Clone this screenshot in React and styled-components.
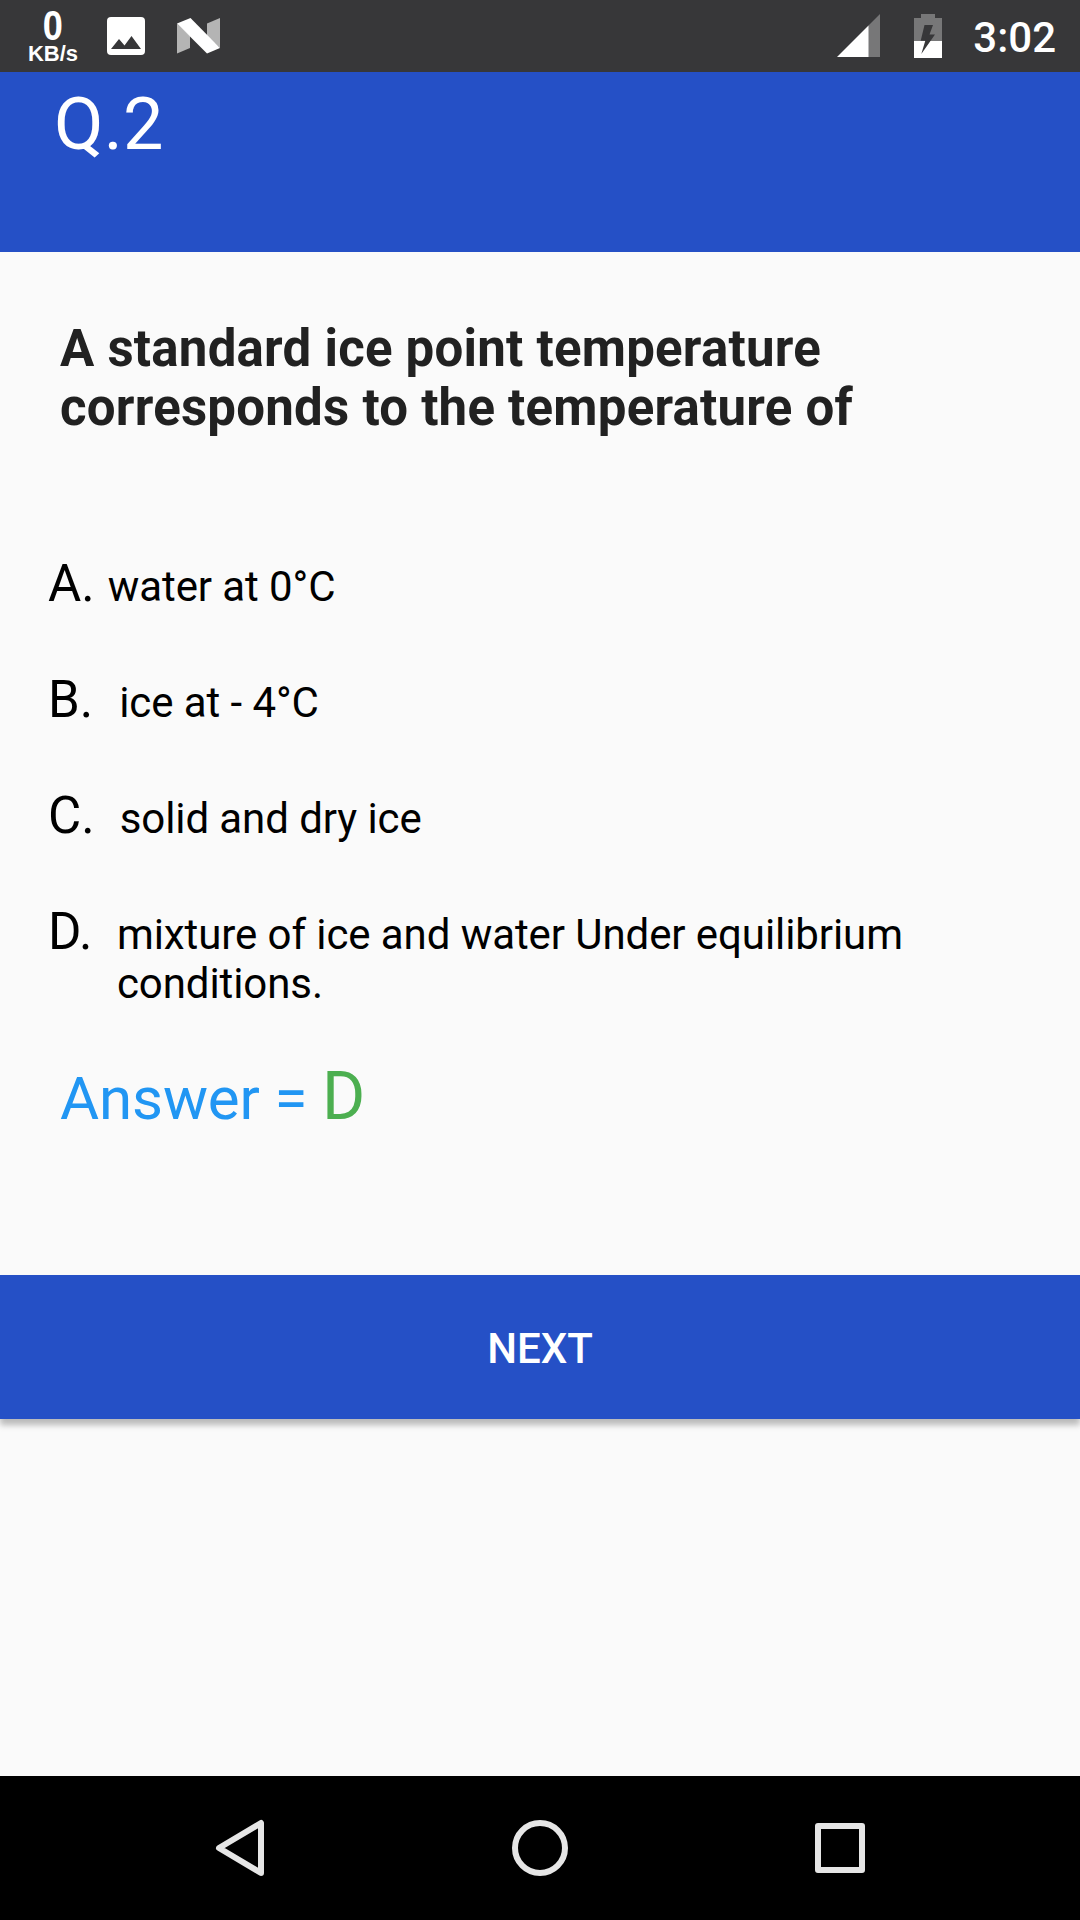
import styled, { createGlobalStyle } from 'styled-components';

const GlobalStyle = createGlobalStyle`
  * {
    box-sizing: border-box;
  }

  body {
    margin: 0;
    font-family: Roboto, 'Liberation Sans', sans-serif;
    background-color: #fafafa;
  }
`;

const Screen = styled.div`
  display: flex;
  flex-direction: column;
  width: 1080px;
  height: 1920px;
  background-color: #fafafa;
`;

const StatusBar = styled.div`
  display: flex;
  justify-content: space-between;
  height: 72px;
  padding: 0 24px 0 28px;
  background-color: #373739;
  color: #fff;
`;

const StatusGroup = styled.div`
  display: flex;
  align-items: flex-start;
`;

const NetSpeed = styled.div`
  display: flex;
  flex-direction: column;
  align-items: center;
  width: 50px;
  padding-top: 8px;
  font-family: 'Liberation Sans', Arial, sans-serif;
  font-weight: 700;
`;

const SpeedValue = styled.span`
  font-size: 42px;
  line-height: 36px;
  transform: scaleX(0.86);
`;

const SpeedUnit = styled.span`
  font-size: 22px;
  line-height: 20px;
`;

const StatusIcon = styled.svg`
  display: block;
  flex: none;
  margin-left: ${({ $space }) => $space}px;
`;

const Clock = styled.span`
  margin-left: 31px;
  font-size: 42px;
  font-weight: 500;
  line-height: 75px;
`;

const Header = styled.header`
  height: 180px;
  padding: 11px 54px 0;
  background-color: #2550c6;
`;

const HeaderTitle = styled.h1`
  margin: 0;
  font-size: 72px;
  font-weight: 400;
  line-height: 84px;
  letter-spacing: 0.3px;
  color: #fff;
`;

const Main = styled.main`
  flex: 1;
  padding-top: 67px;
`;

const Question = styled.h2`
  width: 900px;
  margin: 0 0 117px 60px;
  font-size: 51px;
  font-weight: 700;
  line-height: 59px;
  letter-spacing: 0.23px;
  color: #212121;
`;

const Options = styled.div`
  display: flex;
  flex-direction: column;
  gap: 56px;
  padding-left: 48px;
  color: #000;
`;

const Option = styled.div`
  display: flex;
  align-items: baseline;
  gap: ${({ $gap }) => $gap}px;
`;

const OptionLetter = styled.span`
  font-size: 51px;
  line-height: 60px;
`;

const OptionText = styled.span`
  width: 800px;
  font-size: 42px;
  line-height: 49px;
  letter-spacing: -0.08px;
`;

const Answer = styled.p`
  margin: 50px 0 137px 60px;
  font-size: 60px;
  line-height: 78px;
  letter-spacing: -0.12px;
  color: #2196f3;
`;

const AnswerLetter = styled.span`
  font-size: 66px;
  color: #4caf50;
`;

const NextButton = styled.button`
  display: block;
  width: 100%;
  height: 144px;
  padding: 3px 0 0;
  border: none;
  background-color: #2550c6;
  box-shadow: 0 6px 6px rgba(0, 0, 0, 0.26);
  color: #fff;
  font-family: inherit;
  font-size: 42px;
  font-weight: 500;
`;

const NavBar = styled.nav`
  display: flex;
  justify-content: center;
  align-items: center;
  gap: 228px;
  height: 144px;
  background-color: #000;
`;

const NavIcon = styled.svg`
  display: block;
  fill: none;
  stroke: #e6e6e6;
  stroke-width: 6;
  stroke-linejoin: round;
`;

const options = [
  { letter: 'A.', text: 'water at 0°C', gap: 13 },
  { letter: 'B.', text: 'ice at - 4°C', gap: 26 },
  { letter: 'C.', text: 'solid and dry ice', gap: 25 },
  {
    letter: 'D.',
    text: 'mixture of ice and water Under equilibrium conditions.',
    gap: 24.5,
  },
];

function PictureIcon() {
  return (
    <StatusIcon $space={29} width="38" height="72" viewBox="0 0 38 72">
      <rect y="17" width="38" height="38" rx="4" fill="#fff" />
      <path d="M4 49l8-10 5.500 6.500 7-9.500 9.500 13z" fill="#373739" />
    </StatusIcon>
  );
}

function NougatIcon() {
  return (
    <StatusIcon $space={32} width="43" height="72" viewBox="0 0 43 72">
      <path d="M0 23.500L13 36v12L0 53.500z" fill="#b4b4b4" />
      <path d="M30 23.500L43 18v30L30 36z" fill="#b4b4b4" />
      <path d="M0 23.500L13.500 18 43 48l-13 5.500z" fill="#fff" />
    </StatusIcon>
  );
}

function SignalIcon() {
  return (
    <StatusIcon $space={0} width="43" height="72" viewBox="0 0 43 72">
      <path d="M43 14v43H31V26z" fill="#777778" />
      <path d="M0 57l31.500-31.500v31.500z" fill="#fff" />
    </StatusIcon>
  );
}

function BatteryIcon() {
  return (
    <StatusIcon $space={34} width="28" height="72" viewBox="0 0 28 72">
      <path d="M0 18h7v-4h14v4h7v23H0z" fill="#777778" />
      <path d="M0 41h28v17H0z" fill="#fff" />
      <path d="M10.500 25h8.500l-3.500 9.500H21L7.300 54l4-13.200H6.700z" fill="#373739" />
    </StatusIcon>
  );
}

export default function App() {
  return (
    <>
      <GlobalStyle />
      <Screen>
        <StatusBar>
          <StatusGroup>
            <NetSpeed>
              <SpeedValue>0</SpeedValue>
              <SpeedUnit>KB/s</SpeedUnit>
            </NetSpeed>
            <PictureIcon />
            <NougatIcon />
          </StatusGroup>
          <StatusGroup>
            <SignalIcon />
            <BatteryIcon />
            <Clock>3:02</Clock>
          </StatusGroup>
        </StatusBar>

        <Header>
          <HeaderTitle>Q.2</HeaderTitle>
        </Header>

        <Main>
          <Question>
            A standard ice point temperature corresponds to the temperature of
          </Question>
          <Options>
            {options.map(({ letter, text, gap }) => (
              <Option key={letter} $gap={gap}>
                <OptionLetter>{letter}</OptionLetter>
                <OptionText>{text}</OptionText>
              </Option>
            ))}
          </Options>
          <Answer>
            Answer = <AnswerLetter>D</AnswerLetter>
          </Answer>
          <NextButton type="button">NEXT</NextButton>
        </Main>

        <NavBar>
          <NavIcon width="72" height="72" viewBox="0 0 72 72">
            <path d="M15 36L57 11v50z" />
          </NavIcon>
          <NavIcon width="72" height="72" viewBox="0 0 72 72">
            <circle cx="36" cy="36" r="25" />
          </NavIcon>
          <NavIcon width="72" height="72" viewBox="0 0 72 72">
            <rect x="14" y="14" width="44" height="44" />
          </NavIcon>
        </NavBar>
      </Screen>
    </>
  );
}
